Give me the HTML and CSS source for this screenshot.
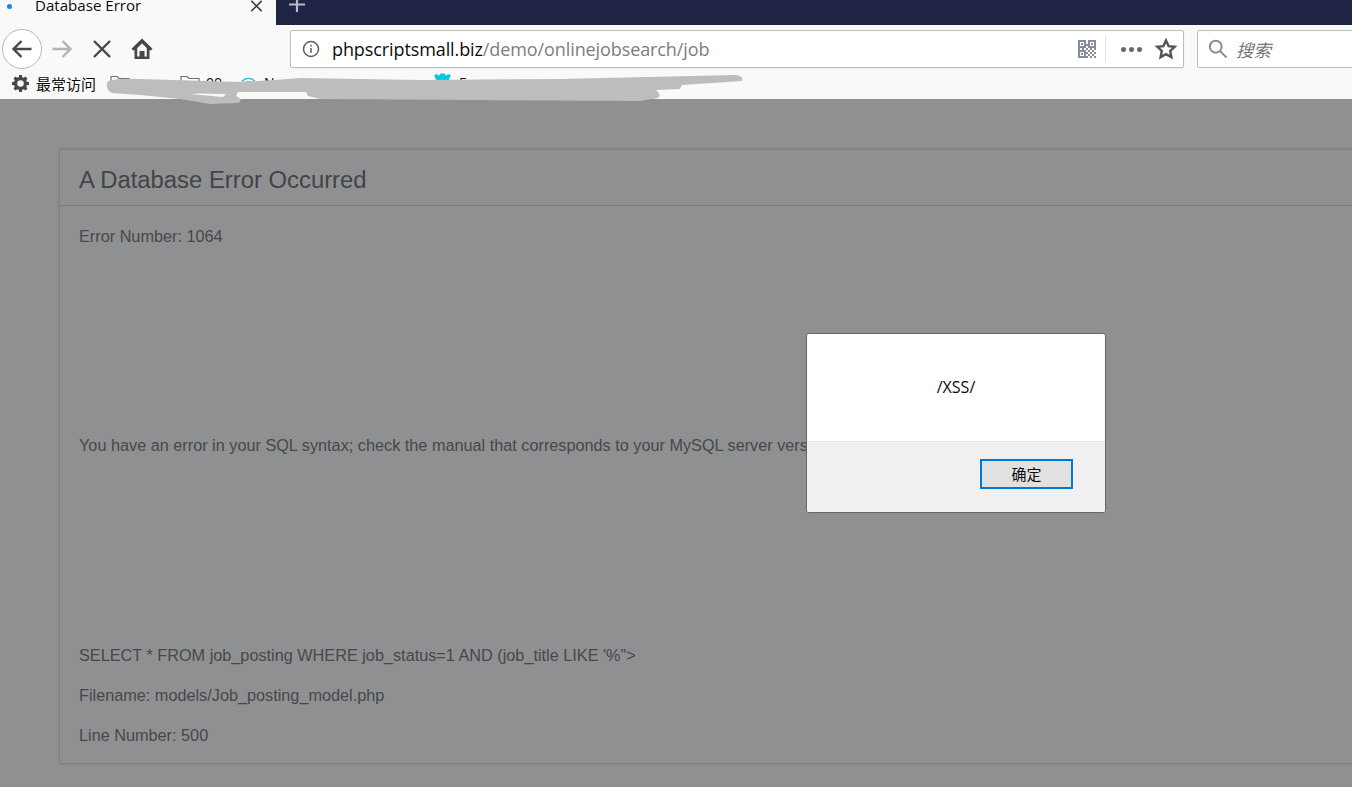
FILE: index.html
```html
<!DOCTYPE html>
<html lang="zh-CN">
<head>
<meta charset="utf-8">
<title>Database Error</title>
<link rel="stylesheet" href="styles.css">
</head>
<body>
<div class="window">
  <header class="chrome">
    <div class="tabbar">
      <div class="tab">
        <span class="tab-dot"></span>
        <span class="tab-title">Database Error</span>
        <svg class="tab-close" viewBox="0 0 14 14"><path d="M1 1 13 13M13 1 1 13"/></svg>
      </div>
      <svg class="new-tab" viewBox="0 0 18 18"><path d="M9 0V15M1 7.500H17"/></svg>
    </div>
    <div class="toolbar">
      <div class="nav">
        <button class="nav-back">
          <svg class="ico" viewBox="0 0 24 24"><path d="M21.500 12H3.500M11.500 4 3.500 12l8 8"/></svg>
        </button>
        <svg class="ico nav-fwd" viewBox="0 0 24 24"><path d="M2.500 12H20.500M12.500 4 20.500 12l-8 8"/></svg>
        <svg class="ico nav-stop" viewBox="0 0 24 24"><path d="M4 4 20 20M20 4 4 20"/></svg>
        <svg class="nav-home" viewBox="0 0 22 22" fill-rule="evenodd"><path d="M11 .5.500 10.800l2 2 1-1V21h15v-9.200l1 1 2-2zM11 5.500l4.800 4.500v8.500h-2.300V13h-5v5.500H6.200V10z"/></svg>
      </div>
      <div class="urlbar">
        <svg class="info" viewBox="0 0 18 18"><circle cx="9" cy="9" r="7.500"/><path d="M9 8v5M9 4.700v1.800"/></svg>
        <span class="url"><span class="url-host">phpscriptsmall.biz</span>/demo/onlinejobsearch/job</span>
        <svg class="qr" viewBox="0 0 18 18" fill-rule="evenodd"><path d="M0 0h8v8H0zM2 2v4h4V2zM10 0h8v8h-8zM12 2v4h4V2zM0 10h8v8H0zM2 12v4h4v-4zM3 3h2v2H3zM13 3h2v2h-2zM3 13h2v2H3zM10 10h2v2h-2zM14 10h2v2h-2zM12 12h2v2h-2zM16 12h2v2h-2zM10 14h2v2h-2zM14 14h2v2h-2zM12 16h2v2h-2zM16 16h2v2h-2zM8 4h2v2H8zM4 8h2v2H4zM8 8h2v2H8zM0 8h2v2H0zM8 12h2v2H8zM8 16h2v2H8zM16 8h2v2h-2zM12 8h2v2h-2z"/></svg>
        <span class="url-sep"></span>
        <span class="more"><i></i><i></i><i></i></span>
        <svg class="star" viewBox="0 0 22 22"><path d="M11 2.500l2.600 5.600 6 .7-4.400 4.200 1.200 6.100L11 16.100l-5.400 3 1.200-6.100-4.400-4.200 6-.7z"/></svg>
      </div>
      <div class="search">
        <svg class="search-ico" viewBox="0 0 22 22"><circle cx="8.500" cy="8.500" r="6.500"/><path d="M13.500 13.500 20.500 20.500"/></svg>
        <span class="search-text">搜索</span>
      </div>
    </div>
    <div class="bookmarks">
      <svg class="gear" viewBox="0 0 18 18" fill-rule="evenodd"><path d="M7.500 0h3l.4 2.300 1.500.6 1.900-1.300 2.100 2.100-1.300 1.900.6 1.500L18 7.500v3l-2.300.4-.6 1.500 1.300 1.900-2.100 2.100-1.900-1.300-1.500.6-.4 2.300h-3l-.4-2.300-1.500-.6-1.900 1.300-2.100-2.100 1.300-1.900-.6-1.500L0 10.500v-3l2.300-.4.6-1.500-1.300-1.900 2.100-2.100 1.900 1.300 1.500-.6zM9 5.500a3.500 3.500 0 1 0 0 7 3.500 3.500 0 0 0 0-7z"/></svg>
      <span class="bm-label">最常访问</span>
      <svg class="folder folder-a" viewBox="0 0 20 14"><path d="M1 13V1.500h6l2 2h10V13z"/></svg>
      <svg class="folder folder-b" viewBox="0 0 20 14"><path d="M1 13V1.500h6l2 2h10V13z"/></svg>
      <span class="bm-frag bm-oo">00</span>
      <svg class="wifi" viewBox="0 0 18 14"><path d="M2 7a9 9 0 0 1 14 0M5 9a5.500 5.500 0 0 1 8 0M8 11a2 2 0 0 1 2.500 0"/></svg>
      <span class="bm-frag bm-ne">Ne</span>
      <svg class="paw" viewBox="0 0 20 14"><path d="M1 2.500 4 1l2 2 2-2.500h4L14 3l2-2 3 1.500L17 7l1 3-3 3H5l-3-3 1-3z"/></svg>
      <span class="bm-frag bm-f">F</span>
    </div>
    <svg class="redaction" viewBox="0 0 750 108" fill-rule="evenodd"><path d="M107 83Q108 78 140 79L240 82 275 80 300 78 420 80 560 79 735 75Q744 76 742 81L682 85 680 89 656 90Q662 95 658 98L640 101 320 99 308 96 306 92 238 92 236 96Q244 100 238 103L210 104 180 99 140 95 112 93Q106 90 107 83ZM190 94 223 97 226 94 200 93.500Z"/></svg>
  </header>

  <main class="page">
    <section class="card">
      <h1 class="card-title">A Database Error Occurred</h1>
      <div class="card-body">
        <p class="line">Error Number: 1064</p>
        <p class="line line-far">You have an error in your SQL syntax; check the manual that corresponds to your MySQL server version for the right</p>
        <p class="line line-farther">SELECT * FROM job_posting WHERE job_status=1 AND (job_title LIKE '%"&gt;</p>
        <p class="line">Filename: models/Job_posting_model.php</p>
        <p class="line">Line Number: 500</p>
      </div>
    </section>

    <div class="dialog">
      <div class="dialog-msg">/XSS/</div>
      <div class="dialog-foot">
        <button class="dialog-ok">确定</button>
      </div>
    </div>
  </main>
</div>
</body>
</html>
```
FILE: styles.css
```css
* { box-sizing: border-box; }
html, body { margin: 0; padding: 0; height: 100%; overflow: hidden; }
body { font-family: "Open Sans", "Noto Sans CJK SC", sans-serif; background: #f9f9fa; }
.window { display: flex; flex-direction: column; width: 1352px; height: 787px; overflow: hidden; position: relative; }

.chrome { flex: none; height: 99px; background: #f9f9fa; position: relative; }

.tabbar { height: 25px; background: #1f2344; display: flex; align-items: flex-start; overflow: hidden; }
.tab { width: 276px; height: 25px; background: #f9f9fa; position: relative; display: flex; align-items: flex-start; }
.tab-dot { width: 5px; height: 5px; border-radius: 50%; background: #0a84ff; margin: 4px 0 0 7px; }
.tab-title { margin: -5px 0 0 23px; font-size: 15.100px; line-height: 20px; color: #0c0c0d; }
.tab-close { position: absolute; left: 250px; top: 0; width: 13px; height: 12px; fill: none; stroke: #3a3a3c; stroke-width: 1.800; }
.new-tab { width: 18px; height: 18px; margin: -3px 0 0 12px; fill: none; stroke: #b9bac4; stroke-width: 2.200; }

.toolbar { height: 47px; display: flex; align-items: center; padding: 1px 0 0 2px; }
.nav { width: 288px; flex: none; display: flex; align-items: center; }
.nav-back { width: 40px; height: 40px; padding: 0; border: 1px solid #b9b9ba; border-radius: 50%; background: #fff; display: flex; align-items: center; justify-content: center; }
.ico { width: 24px; height: 24px; fill: none; stroke: #47474a; stroke-width: 2.400; display: block; flex: none; }
.nav-fwd { stroke: #b4b4b6; margin-left: 8px; }
.nav-stop { margin-left: 16px; }
.nav-home { width: 22px; height: 22px; margin-left: 17px; fill: #47474a; }

.urlbar { flex: none; width: 894px; height: 38px; background: #fff; border: 1px solid #bdbdbe; border-radius: 2px; display: flex; align-items: center; box-shadow: 0 1px 3px rgba(0,0,0,.05); }
.info { width: 18px; height: 18px; margin-left: 11px; flex: none; fill: none; stroke: #5f5f62; stroke-width: 1.500; }
.url { margin-left: 12px; font-size: 18px; color: #7d7d80; white-space: nowrap; flex: 1; letter-spacing: -.1px; }
.url-host { color: #0c0c0d; }
.qr { width: 18px; height: 18px; flex: none; fill: #848d98; }
.url-sep { width: 1px; height: 26px; background: #e3e3e4; margin-left: 9px; flex: none; }
.more { display: flex; gap: 3px; margin-left: 15px; flex: none; }
.more i { width: 5px; height: 5px; border-radius: 50%; background: #67676a; display: block; }
.star { width: 22px; height: 22px; margin: 0 6px 0 13px; flex: none; fill: none; stroke: #555558; stroke-width: 2.400; }

.search { flex: none; width: 170px; height: 38px; margin-left: 13px; background: #fff; border: 1px solid #bdbdbe; border-radius: 2px; display: flex; align-items: center; }
.search-ico { width: 20px; height: 20px; margin-left: 10px; flex: none; fill: none; stroke: #8c8c8e; stroke-width: 2.200; }
.search-text { margin-left: 8px; font-size: 17.500px; font-style: italic; color: #77777a; }

.bookmarks { height: 27px; display: flex; align-items: center; position: relative; padding-bottom: 5px; }
.gear { width: 17px; height: 17px; margin-left: 12px; fill: #47474a; flex: none; }
.bm-label { margin-left: 7px; font-size: 15px; color: #0c0c0d; white-space: nowrap; }
.folder, .wifi, .paw, .bm-frag { position: absolute; }
.folder { width: 20px; height: 14px; top: 3px; fill: #fff; stroke: #6f6f70; stroke-width: 1.200; }
.folder-a { left: 110px; }
.folder-b { left: 180px; }
.wifi { left: 240px; top: 3px; width: 17px; height: 13px; fill: none; stroke: #35b4cf; stroke-width: 1.500; }
.paw { left: 433px; top: 1px; width: 19px; height: 13px; fill: #00c8de; }
.bm-frag { font-size: 14px; color: #0c0c0d; line-height: 18px; top: 2px; }
.bm-oo { left: 206px; }
.bm-ne { left: 264px; }
.bm-f { left: 459px; }

.redaction { position: absolute; left: 0; top: 0; width: 750px; height: 108px; fill: #bdbdbd; z-index: 3; }

.page { flex: 1; position: relative; padding: 50px 0 0 59px; overflow: hidden;
  background: #8f9091 repeating-conic-gradient(#8d8e90 0 25%, #919293 0 50%) 0 0 / 4px 4px;
  font-family: "Liberation Sans", Arial, sans-serif; }

.card { width: 1400px; height: 615px; border: 1px solid #7e7f80; border-radius: 2px; box-shadow: 0 0 3px rgba(0,0,0,.12); }
.card-title { margin: 0; height: 56px; padding: 0 19px; border-bottom: 1px solid #7b7c7d; font-weight: 400; font-size: 23.850px; line-height: 60px; color: #434445; white-space: nowrap; }
.card-body { padding: 20px 19px 0; }
.line { margin: 0 0 16px; height: 24px; font-size: 16.250px; line-height: 20px; color: #474849; white-space: nowrap; }
.line-far { margin-top: 185px; }
.line-farther { margin-top: 186px; }

.dialog { position: absolute; left: 806px; top: 234px; width: 300px; height: 180px; border: 1px solid #666; border-radius: 3px; background: #fff; display: flex; flex-direction: column; font-family: "Noto Sans CJK SC", "Noto Sans", sans-serif; z-index: 5; overflow: hidden; }
.dialog-msg { height: 107px; padding-top: 41px; text-align: center; font-family: "Open Sans", sans-serif; font-size: 16px; line-height: 24px; color: #0c0c0d; }
.dialog-foot { flex: 1; background: #f0f0f0; border-top: 1px solid #e4e4e4; display: flex; justify-content: flex-end; align-items: flex-start; padding: 17px 32px 0 0; }
.dialog-ok { width: 93px; height: 30px; padding: 0 0 1px; border: 2px solid #0078d7; background: #e1e1e1; font-family: inherit; font-size: 15px; line-height: 20px; color: #0c0c0d; }
```
